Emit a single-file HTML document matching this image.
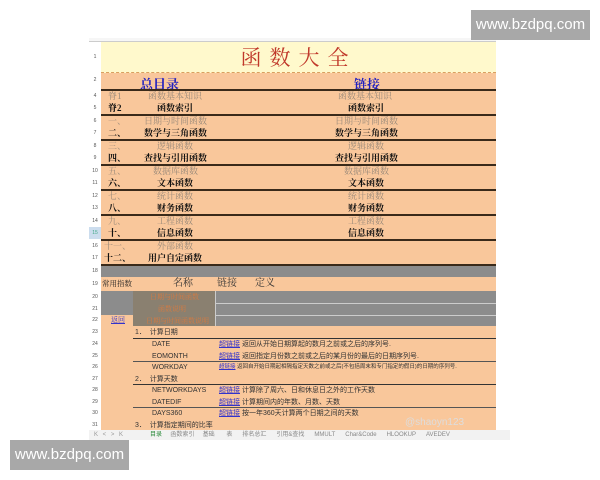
<html><head><style>
body{margin:0;width:600px;height:480px;background:#fff;position:relative;overflow:hidden;font-family:"Liberation Serif","Noto Serif CJK SC",serif}
div{position:absolute;box-sizing:border-box}
.t{font-size:9px;white-space:nowrap}
div.rh{left:89px;width:12px;font-size:5px;color:#555;text-align:center;font-family:"Liberation Sans",sans-serif}
.b{font-weight:bold;color:#111}
.g{color:#9a8a7a}
.ln{left:101px;width:395px;height:2px;background:#3a2a1a}
.wm{background:#a8a8a8;color:#fff;font:15px "Liberation Sans",sans-serif;text-align:center;line-height:30px;width:119px;height:30px}
.s{font-family:"Liberation Sans","Noto Sans CJK SC",sans-serif;font-size:7px;color:#333}
</style></head><body>
<div style="left:89px;top:38px;width:407px;height:4px;border-bottom:1px solid #ccc;background:#f6f6f6"></div>
<div style="left:101px;top:42px;width:395px;height:31px;background:#fff9cc;border-bottom:1px dashed #d9a060"></div>
<div style="left:101px;top:42px;width:395px;height:31px;text-align:center;font-size:21px;line-height:31px;color:#c0392b;letter-spacing:8px;font-family:'Noto Serif CJK SC',serif">函数大全</div>
<div style="left:101px;top:73px;width:395px;height:191px;background:#f9c79b"></div>
<div class="t" style="left:140px;top:74px;font-size:13px;font-weight:bold;color:#2020c0">总目录</div>
<div class="t" style="left:354px;top:74px;font-size:13px;font-weight:bold;color:#2020c0;text-decoration:underline">链接</div>
<div class="ln" style="top:89px"></div>
<div class="rh" style="top:72px;line-height:17px">2</div>
<div class="rh" style="top:42px;line-height:31px">1</div>

<div class="rh t" style="top:90px;line-height:12px">4</div>
<div class="t g" style="left:108px;top:90px;line-height:12px">脊1</div><div class="t g" style="left:148px;top:90px;line-height:12px">函数基本知识</div><div class="t g" style="left:338px;top:90px;line-height:12px">函数基本知识</div>
<div class="rh t" style="top:102px;line-height:12px">5</div>
<div class="t b" style="left:108px;top:102px;line-height:12px">脊2</div><div class="t b" style="left:157px;top:102px;line-height:12px">函数索引</div><div class="t b" style="left:348px;top:102px;line-height:12px">函数索引</div>
<div class="ln" style="top:114px"></div>
<div class="rh t" style="top:115px;line-height:12px">6</div>
<div class="t g" style="left:108px;top:115px;line-height:12px">一、</div><div class="t g" style="left:144px;top:115px;line-height:12px">日期与时间函数</div><div class="t g" style="left:335px;top:115px;line-height:12px">日期与时间函数</div>
<div class="rh t" style="top:127px;line-height:12px">7</div>
<div class="t b" style="left:108px;top:127px;line-height:12px">二、</div><div class="t b" style="left:144px;top:127px;line-height:12px">数学与三角函数</div><div class="t b" style="left:335px;top:127px;line-height:12px">数学与三角函数</div>
<div class="ln" style="top:139px"></div>
<div class="rh t" style="top:140px;line-height:12px">8</div>
<div class="t g" style="left:108px;top:140px;line-height:12px">三、</div><div class="t g" style="left:157px;top:140px;line-height:12px">逻辑函数</div><div class="t g" style="left:348px;top:140px;line-height:12px">逻辑函数</div>
<div class="rh t" style="top:152px;line-height:12px">9</div>
<div class="t b" style="left:108px;top:152px;line-height:12px">四、</div><div class="t b" style="left:144px;top:152px;line-height:12px">查找与引用函数</div><div class="t b" style="left:335px;top:152px;line-height:12px">查找与引用函数</div>
<div class="ln" style="top:164px"></div>
<div class="rh t" style="top:165px;line-height:12px">10</div>
<div class="t g" style="left:108px;top:165px;line-height:12px">五、</div><div class="t g" style="left:153px;top:165px;line-height:12px">数据库函数</div><div class="t g" style="left:344px;top:165px;line-height:12px">数据库函数</div>
<div class="rh t" style="top:177px;line-height:12px">11</div>
<div class="t b" style="left:108px;top:177px;line-height:12px">六、</div><div class="t b" style="left:157px;top:177px;line-height:12px">文本函数</div><div class="t b" style="left:348px;top:177px;line-height:12px">文本函数</div>
<div class="ln" style="top:189px"></div>
<div class="rh t" style="top:190px;line-height:12px">12</div>
<div class="t g" style="left:108px;top:190px;line-height:12px">七、</div><div class="t g" style="left:157px;top:190px;line-height:12px">统计函数</div><div class="t g" style="left:348px;top:190px;line-height:12px">统计函数</div>
<div class="rh t" style="top:202px;line-height:12px">13</div>
<div class="t b" style="left:108px;top:202px;line-height:12px">八、</div><div class="t b" style="left:157px;top:202px;line-height:12px">财务函数</div><div class="t b" style="left:348px;top:202px;line-height:12px">财务函数</div>
<div class="ln" style="top:214px"></div>
<div class="rh t" style="top:215px;line-height:12px">14</div>
<div class="t g" style="left:108px;top:215px;line-height:12px">九、</div><div class="t g" style="left:157px;top:215px;line-height:12px">工程函数</div><div class="t g" style="left:348px;top:215px;line-height:12px">工程函数</div>
<div class="rh t" style="top:227px;line-height:12px;background:#cde;color:#4a8">15</div>
<div class="t b" style="left:108px;top:227px;line-height:12px">十、</div><div class="t b" style="left:157px;top:227px;line-height:12px">信息函数</div><div class="t b" style="left:348px;top:227px;line-height:12px">信息函数</div>
<div class="ln" style="top:239px"></div>
<div class="rh t" style="top:240px;line-height:12px">16</div>
<div class="t g" style="left:104px;top:240px;line-height:12px">十一、</div><div class="t g" style="left:157px;top:240px;line-height:12px">外部函数</div>
<div class="rh t" style="top:252px;line-height:12px">17</div>
<div class="t b" style="left:104px;top:252px;line-height:12px">十二、</div><div class="t b" style="left:148px;top:252px;line-height:12px">用户自定函数</div>
<div class="ln" style="top:264px"></div>
<div style="left:101px;top:266px;width:395px;height:11px;background:#8c8c8c"></div>
<div class="rh t" style="top:266px;line-height:11px">18</div>
<div style="left:101px;top:277px;width:395px;height:14px;background:#f9c79b"></div>
<div class="rh t" style="top:277px;line-height:14px">19</div>
<div class="t" style="left:102px;top:277px;line-height:14px;font-size:7.5px;color:#222">常用指数</div>
<div class="t" style="left:173px;top:277px;line-height:14px;font-size:10px;color:#333">名称</div>
<div class="t" style="left:217px;top:277px;line-height:14px;font-size:10px;color:#333">链接</div>
<div class="t" style="left:255px;top:277px;line-height:14px;font-size:10px;color:#333">定义</div>
<div style="left:101px;top:291px;width:395px;height:35px;background:#8c8c8c"></div>
<div style="left:133px;top:291px;width:83px;height:35px;background:#8a8070;border-right:1px solid #ccc"></div>
<div style="left:216px;top:303px;width:280px;height:1px;background:#ccc"></div>
<div style="left:216px;top:315px;width:280px;height:1px;background:#ccc"></div>
<div style="left:101px;top:315px;width:32px;height:11px;background:#f9c79b"></div>
<div class="t" style="left:111px;top:315px;font-size:7px;color:#33c;text-decoration:underline;line-height:11px">返回</div>
<div class="t" style="left:150px;top:292px;font-size:7px;color:#d87a40;line-height:11px">日期与时间函数</div>
<div class="t" style="left:158px;top:304px;font-size:7px;color:#d87a40;line-height:11px">函数说明</div>
<div class="t" style="left:146px;top:316px;font-size:7px;color:#d87a40;line-height:11px">日期与时间函数说明</div>
<div class="rh t" style="top:291px;line-height:12px">20</div>
<div class="rh t" style="top:303px;line-height:12px">21</div>
<div class="rh t" style="top:315px;line-height:11px">22</div>
<div style="left:101px;top:326px;width:395px;height:104px;background:#f9c79b"></div>
<div style="left:133px;top:338px;width:363px;height:1px;background:#333"></div>
<div style="left:133px;top:384px;width:363px;height:1px;background:#333"></div>
<div style="left:133px;top:361px;width:363px;height:1px;background:#555"></div>
<div style="left:133px;top:407px;width:363px;height:1px;background:#555"></div>
<div class="rh t" style="top:327px;line-height:11px">23</div><div class="rh t" style="top:339px;line-height:11px">24</div><div class="rh t" style="top:351px;line-height:11px">25</div><div class="rh t" style="top:362px;line-height:11px">26</div><div class="rh t" style="top:374px;line-height:11px">27</div><div class="rh t" style="top:385px;line-height:11px">28</div><div class="rh t" style="top:397px;line-height:11px">29</div><div class="rh t" style="top:408px;line-height:11px">30</div><div class="rh t" style="top:420px;line-height:11px">31</div>
<div class="s" style="left:135px;top:327px;line-height:11px">1．&nbsp; 计算日期</div>
<div class="s" style="left:152px;top:339px;line-height:11px">DATE</div>
<div class="s" style="left:152px;top:351px;line-height:11px">EOMONTH</div>
<div class="s" style="left:152px;top:362px;line-height:11px">WORKDAY</div>
<div class="s" style="left:135px;top:374px;line-height:11px">2．&nbsp; 计算天数</div>
<div class="s" style="left:152px;top:385px;line-height:11px">NETWORKDAYS</div>
<div class="s" style="left:152px;top:397px;line-height:11px">DATEDIF</div>
<div class="s" style="left:152px;top:408px;line-height:11px">DAYS360</div>
<div class="s" style="left:135px;top:420px;line-height:11px">3．&nbsp; 计算指定期间的比率</div>
<div class="s" style="left:219px;top:339px;line-height:11px"><u style="color:#33c">超链接</u> 返回从开始日期算起的数月之前或之后的序列号.</div>
<div class="s" style="left:219px;top:351px;line-height:11px"><u style="color:#33c">超链接</u> 返回指定月份数之前或之后的某月份的最后的日期序列号.</div>
<div class="s" style="left:219px;top:362px;line-height:11px;font-size:5.5px"><u style="color:#33c">超链接</u> 返回自开始日期起相隔指定天数之前或之后(不包括周末和专门指定的假日)的日期的序列号.</div>
<div class="s" style="left:219px;top:385px;line-height:11px"><u style="color:#33c">超链接</u> 计算除了周六、日和休息日之外的工作天数</div>
<div class="s" style="left:219px;top:397px;line-height:11px"><u style="color:#33c">超链接</u> 计算期间内的年数、月数、天数</div>
<div class="s" style="left:219px;top:408px;line-height:11px"><u style="color:#33c">超链接</u> 按一年360天计算两个日期之间的天数</div>
<div class="s" style="left:405px;top:417px;font-size:10px;color:#ddd">@shaoyn123</div>
<div style="left:89px;top:430px;width:421px;height:10px;background:#f2f2f2"></div>
<div class="s" style="left:94px;top:430px;line-height:10px;font-size:6px;color:#999;word-spacing:3px">K &lt; &gt; K</div>
<div class="s" style="left:150px;top:430px;line-height:10px;font-size:6px;color:#888;width:360px;white-space:nowrap"><span style="color:#2a8a3a">目录</span>&nbsp;&nbsp;&nbsp;&nbsp;&nbsp;函数索引&nbsp;&nbsp;&nbsp;&nbsp;&nbsp;基础&nbsp;&nbsp;&nbsp;&nbsp;&nbsp;&nbsp;&nbsp;表&nbsp;&nbsp;&nbsp;&nbsp;&nbsp;&nbsp;排名总汇&nbsp;&nbsp;&nbsp;&nbsp;&nbsp;&nbsp;引用&amp;查找&nbsp;&nbsp;&nbsp;&nbsp;&nbsp;&nbsp;MMULT&nbsp;&nbsp;&nbsp;&nbsp;&nbsp;&nbsp;Char&amp;Code&nbsp;&nbsp;&nbsp;&nbsp;&nbsp;&nbsp;HLOOKUP&nbsp;&nbsp;&nbsp;&nbsp;&nbsp;&nbsp;AVEDEV</div>
<div class="wm" style="left:471px;top:10px">www.bzdpq.com</div>
<div class="wm" style="left:10px;top:440px">www.bzdpq.com</div>
</body></html>
